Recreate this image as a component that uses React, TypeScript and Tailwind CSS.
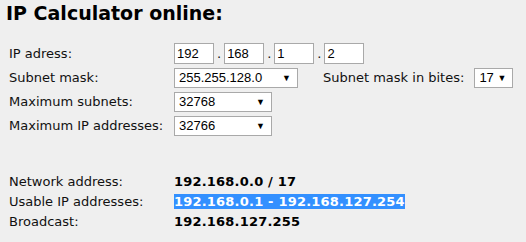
const labelFont = "font-['DejaVu_Sans',Verdana,sans-serif]";
const fieldFont = "font-['Liberation_Sans',Arial,sans-serif]";

function Octet({ value }: { value: string }) {
  return (
    <div
      className={`${fieldFont} flex h-[21px] w-[40px] items-center border border-[#a9a9a9] bg-white px-[2px] text-[13px] text-black`}
    >
      {value}
    </div>
  );
}

function Select({ value, width }: { value: string; width: string }) {
  return (
    <div
      className={`${fieldFont} flex h-[20px] ${width} items-center justify-between border border-[#a9a9a9] bg-white pl-[4px] pr-[6px] text-[13px] text-black`}
    >
      <span>{value}</span>
      <span className="text-[9px] leading-none">▼</span>
    </div>
  );
}

const results = [
  { label: 'Network address:', value: '192.168.0.0 / 17', selected: false },
  { label: 'Usable IP addresses:', value: '192.168.0.1 - 192.168.127.254', selected: true },
  { label: 'Broadcast:', value: '192.168.127.255', selected: false },
];

export default function App() {
  return (
    <div className={`${labelFont} h-[242px] w-[526px] bg-[#efefef] text-[13px] text-[#111]`}>
      <h1 className="pl-[6px] pt-[1px] text-[19px] font-bold leading-[24px] text-black">
        IP Calculator online:
      </h1>

      {/* Input form */}
      <div className="mt-[18px] flex flex-col gap-[4px] pl-[9px]">
        <div className="flex items-center">
          <span className="w-[165px]">IP adress:</span>
          <div className="flex items-center gap-[3px]">
            <Octet value="192" />
            <span>.</span>
            <Octet value="168" />
            <span>.</span>
            <Octet value="1" />
            <span>.</span>
            <Octet value="2" />
          </div>
        </div>
        <div className="flex items-center">
          <span className="w-[165px]">Subnet mask:</span>
          <Select value="255.255.128.0" width="w-[124px]" />
          <span className="ml-[25px] mr-[10px]">Subnet mask in bites:</span>
          <Select value="17" width="w-[39px]" />
        </div>
        <div className="flex items-center">
          <span className="w-[165px]">Maximum subnets:</span>
          <Select value="32768" width="w-[98px]" />
        </div>
        <div className="flex items-center">
          <span className="w-[165px]">Maximum IP addresses:</span>
          <Select value="32766" width="w-[98px]" />
        </div>
      </div>

      {/* Results */}
      <div className="mt-[36px] flex flex-col pl-[9px] leading-[20px]">
        {results.map(r => (
          <div key={r.label} className="flex">
            <span className="w-[165px]">{r.label}</span>
            <span className="font-bold tracking-[0.2px] text-black">
              {r.selected ? (
                <span className="bg-[#3390ff] text-white">{r.value}</span>
              ) : (
                r.value
              )}
            </span>
          </div>
        ))}
      </div>
    </div>
  );
}
